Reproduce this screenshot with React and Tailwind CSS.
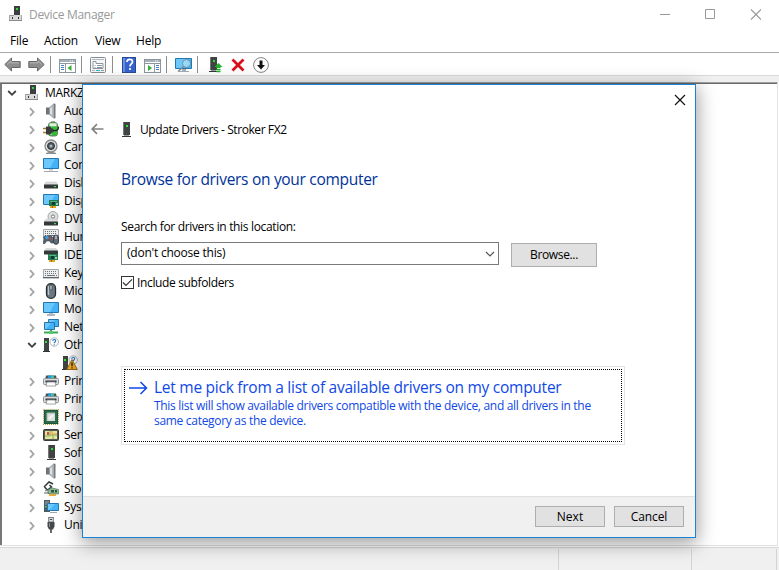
import React from "react";

const Svg = ({ w = 16, h = 16, className = "", children }) => (
  <svg width={w} height={h} viewBox={`0 0 ${w} ${h}`} className={`block shrink-0 ${className}`} fill="none">
    {children}
  </svg>
);

/* ---------- shared drawings ---------- */

const Tower = ({ x = 0 }) => (
  <g transform={`translate(${x} 0)`} shapeRendering="crispEdges">
    <rect x="1" y="0" width="7" height="13" fill="#3f4344" />
    <rect x="1" y="0" width="1" height="13" fill="#777" />
    <rect x="4" y="3" width="2" height="2" fill="#27e32f" />
    <rect x="2" y="13" width="5" height="1" fill="#999" />
    <rect x="0" y="14" width="9" height="1" fill="#333" />
  </g>
);

const Screen = ({ x = 0, y = 0, w = 16, h = 11 }) => (
  <g>
    <path d={`M${x + 0.5} ${y + 0.5}h${w - 1}v${h - 1}h-${w - 1}z`} fill="#42b3f7" stroke="#2476ae" />
    <path d={`M${x + 1} ${y + 1}h${w - 5}l-5 ${h - 2}H${x + 1}z`} fill="#83d2ff" opacity=".65" />
  </g>
);

const Card = ({ x = 6, y = 7 }) => (
  <g transform={`translate(${x} ${y})`} shapeRendering="crispEdges">
    <rect width="10" height="6" fill="#237a50" />
    <rect x="1" y="1" width="7" height="1" fill="#57b585" />
    <rect x="3" y="2" width="3" height="3" fill="#103e2d" />
    <rect x="7" y="3" width="2" height="2" fill="#9ed0ae" />
    <rect x="1" y="6" width="6" height="2" fill="#e9a51d" />
    <rect x="3" y="6" width="1" height="2" fill="#a36b09" />
  </g>
);

const Plate = ({ y = 9 }) => (
  <g>
    <path d={`M3 ${y}h10l2 3H1z`} fill="#d9dbdc" stroke="#bbb" strokeWidth=".4" />
    <rect x="1" y={y + 2.5} width="14" height="4" rx=".6" fill="#343838" />
    <rect x="11" y={y + 4} width="2" height="1.2" fill="#35e444" />
  </g>
);

const ComputerIcon = () => (
  <svg width="15" height="16" viewBox="0 0 15 16" className="block shrink-0" shapeRendering="crispEdges">
    <rect x="6" y="0" width="6" height="9" fill="#3b3f40" />
    <rect x="8" y="2" width="2" height="2" fill="#2fd73a" />
    <rect x="1" y="9" width="13" height="6" fill="#d8d9da" />
    <rect x="1" y="9" width="5" height="1" fill="#999" />
    <rect x="1" y="9" width="1" height="6" fill="#aaa" />
    <rect x="13" y="9" width="1" height="6" fill="#aaa" />
    <rect x="1" y="14" width="13" height="1" fill="#8a8a8a" />
    <rect x="4" y="11" width="1" height="2" fill="#333" />
    <rect x="10" y="11" width="1" height="2" fill="#333" />
  </svg>
);

const Speaker = () => (
  <Svg>
    <rect x="3" y="4.5" width="3.5" height="7" fill="#6d7478" />
    <path d="M6.5 4.5 11 .7v14.6l-4.500-3.800z" fill="#b4babd" stroke="#899094" strokeWidth=".7" />
    <path d="M11 .7h1.500v14.600H11z" fill="#747b80" />
    <path d="M7 5.500 9 4v8l-2-1.500z" fill="#dde1e3" />
  </Svg>
);

const Battery = () => (
  <Svg>
    <rect x="8" y="0" width="4" height="2" fill="#aaa" />
    <rect x="5.500" y="1.500" width="9" height="13.500" rx="2.500" fill="#33b936" stroke="#5f8a5d" />
    <path d="M6.500 2.300h7v3h-7z" fill="#e4eee4" />
    <path d="M8 6v8" stroke="#94ee82" strokeWidth="1.500" />
    <path d="M0 7.500h4M0 11.500h4" stroke="#a67828" strokeWidth="1.600" />
    <path d="M3 5.500h4l3.500 3v2l-3.500 3H3z" fill="#393c3d" />
    <path d="M10 9.500c5 .5 5.500-1 5.500-4" stroke="#222" strokeWidth="1.300" />
  </Svg>
);

const Camera = () => (
  <Svg>
    <circle cx="8" cy="7" r="6" fill="#dde0e1" stroke="#85898b" strokeWidth="1.300" />
    <circle cx="8" cy="7" r="3.500" fill="#52595d" stroke="#303536" />
    <circle cx="8" cy="7" r="1.500" fill="#a9b9c3" />
    <path d="M3 14.500c2-1.500 8-1.500 10 0z" fill="#a9adaf" stroke="#777" strokeWidth=".7" />
  </Svg>
);

const Computer = () => (
  <Svg>
    <Screen y={1} h={11} />
    <path d="M6 12h4v1.500H6z" fill="#bcc6cd" />
    <path d="M1 14.500h14" stroke="#9ca9b2" />
  </Svg>
);

const Disk = () => <Svg><Plate y={7} /></Svg>;
const Display = () => <Svg><Screen y={1} h={11} /><Card /></Svg>;

const Dvd = () => (
  <Svg>
    <circle cx="10" cy="5.500" r="5" fill="#dcdfe0" stroke="#a4a9ac" />
    <circle cx="10" cy="5.500" r="1.600" fill="#fff" stroke="#777" />
    <Plate y={8} />
  </Svg>
);

const Keys = ({ y = 4 }) => (
  <g transform={`translate(0 ${y})`}>
    <path d="M.5.5h15v8H.5z" fill="#eceeef" stroke="#a3a8ab" />
    <path d="M2 2.500h12M2 4.500h12" stroke="#6c7377" strokeDasharray="1 1" />
    <path d="M2 6.500h1M4 6.500h8M13 6.500h1" stroke="#6c7377" />
    <path d="M0 8.800h16" stroke="#444b50" />
  </g>
);

const Keyboard = () => <Svg><Keys /></Svg>;

const Hid = () => (
  <Svg>
    <Keys y={0} />
    <path d="M1.500 7h7l2 7H8L6.500 12h-3L2 14.500H0z" fill="#59626a" stroke="#3f464b" strokeWidth=".6" />
    <circle cx="4" cy="8.500" r="1.800" fill="#3d9de6" />
    <circle cx="7.200" cy="9.500" r="1" fill="#d7443a" />
    <rect x="10.500" y="6" width="5" height="9.300" rx="2.500" fill="#616e78" stroke="#363d43" />
    <path d="M13 6.500v3.500" stroke="#dce4e8" />
  </Svg>
);

const Ide = () => (
  <Svg>
    <path d="M3 1h10l2 3H1z" fill="#d9dbdc" />
    <rect x="1" y="3.500" width="14" height="4" rx=".7" fill="#34393a" />
    <Card x={5} y={7} />
  </Svg>
);

const Mouse = () => (
  <Svg>
    <rect x="3.500" y=".7" width="9" height="14.600" rx="4.300" fill="#6b7781" stroke="#282e32" strokeWidth="1.300" />
    <path d="M5.500 3v9" stroke="#b8c4ce" strokeWidth="1.300" />
    <rect x="7" y="2" width="2" height="5" rx="1" fill="#d9e2e8" stroke="#2f363b" strokeWidth=".7" />
  </Svg>
);

const Monitor = () => (
  <Svg>
    <Screen y={1} h={11} />
    <path d="M6 12h4v1H6z" fill="#b4c0c8" />
    <path d="M4 14h8" stroke="#9aa6b6" strokeWidth="1.600" />
  </Svg>
);

const Network = () => (
  <Svg>
    <Screen x={5} y={0} w={11} h={8} />
    <Screen x={1} y={3} w={11} h={8} />
    <path d="M1 13.500h14M8 11v3" stroke="#3da955" strokeWidth="2" />
    <rect x="6" y="12" width="4" height="3" fill="#56c56c" />
  </Svg>
);

const Question = () => (
  <g>
    <circle cx="11.200" cy="5" r="4.200" fill="#fff" stroke="#a6aaad" strokeWidth=".9" />
    <path d="M9.700 4c0-2 3-2 3-.2 0 1.200-1.500 1.200-1.500 2.500M11.200 7.200v1" stroke="#2476c5" strokeWidth="1.100" />
  </g>
);

const SmallTower = () => (
  <g shapeRendering="crispEdges">
    <rect x="1" y="1" width="5" height="13" fill="#3f4344" />
    <rect x="2" y="4" width="2" height="2" fill="#27e32f" />
    <rect x="0" y="14" width="7" height="1" fill="#333" />
  </g>
);

const Other = () => <Svg><SmallTower /><Question /></Svg>;

const Unknown = () => (
  <Svg>
    <SmallTower />
    <Question />
    <path d="M10 4.500 15.300 14.500H4.700z" fill="#f5aa1c" stroke="#8a6115" strokeWidth=".9" strokeLinejoin="round" />
    <path d="M10 7.500v3.800M10 12.200v1.300" stroke="#222" strokeWidth="1.400" />
  </Svg>
);

const Printer = () => (
  <Svg>
    <path d="M3 2.500h10l.7 3H2.300z" fill="#4b5256" />
    <path d="M5 2.500h3v3H5z" fill="#2494e6" />
    <path d="M8 2.500h3v3H8z" fill="#3ac69b" />
    <rect x=".5" y="5.500" width="15" height="6" rx="1" fill="#d7dadc" stroke="#8c9396" />
    <path d="M2.500 8.500h11" stroke="#33393c" strokeWidth="2" />
    <path d="M4 9h8l1 4H3z" fill="#fff" stroke="#888e91" strokeWidth=".8" />
  </Svg>
);

const Processor = () => (
  <Svg>
    <rect x=".6" y=".6" width="14.800" height="14.800" stroke="#a69b46" strokeWidth="1.200" strokeDasharray="1 1" />
    <rect x="1.500" y="1.500" width="13" height="13" fill="#296a4b" stroke="#1f573e" />
    <rect x="4" y="4" width="8" height="8" fill="#dddfdd" />
    <path d="M4 12V4h8" stroke="#a9b5aa" />
    <path d="m6 10 4-4" stroke="#f4f5f4" strokeWidth="2" />
  </Svg>
);

const Sensor = () => (
  <Svg>
    <rect x=".5" y="2.500" width="15" height="11" rx="1" fill="#535957" stroke="#373c3b" />
    <rect x="2" y="4" width="12" height="8" fill="#e5e49c" />
    <path d="M2 9h5V4M7 8h7M10 8v4" stroke="#80af60" />
    <path d="M9 4v3h5" stroke="#e69b43" />
    <rect x="4" y="5" width="2" height="3" fill="#df493c" />
  </Svg>
);

const Software = () => <Svg><Tower x={4} /></Svg>;

const Storage = () => (
  <Svg>
    <path d="m1 6 5-5 4 2M1.500 6l3 3 4-3-2-2" stroke="#333b3e" strokeWidth="1.500" />
    <path d="M2 9.500h5" stroke="#8b9296" strokeWidth="1.500" />
    <path d="m5 9 4-2 6.500 1.500v4.500L5 12.500z" fill="#8db99b" stroke="#4d7a5d" strokeWidth=".7" />
    <rect x="8" y="9" width="3" height="2.500" fill="#2d5840" />
    <rect x="12" y="9" width="2" height="2.500" fill="#2d5840" />
    <path d="M6 14h7" stroke="#e6a326" strokeWidth="1.800" />
    <path d="M1 12h5" stroke="#5c6467" />
  </Svg>
);

const System = () => (
  <Svg>
    <rect x="1" y="1" width="6" height="12" fill="#4e5a61" />
    <path d="M2 3h4M2 5h4" stroke="#9dacb5" />
    <rect x="2" y="7" width="1.500" height="1.500" fill="#45df4a" />
    <Screen x={4} y={4} w={12} h={8} />
    <path d="M7 13.500h7" stroke="#9aa8b0" />
  </Svg>
);

const Usb = () => (
  <Svg>
    <rect x="5.700" y=".5" width="4.600" height="4.500" fill="#dfe2e3" stroke="#707679" />
    <path d="M7 2.500h2" stroke="#444" />
    <path d="M4.500 5h7v4.500L10 12.500H6L4.500 9.500z" fill="#45494b" />
    <path d="M6.500 6v4" stroke="#888d90" />
    <path d="M8 12v4" stroke="#45494b" strokeWidth="1.600" />
  </Svg>
);

/* ---------- device tree ---------- */

const devices = [
  ["Audio", Speaker],
  ["Batteries", Battery],
  ["Cameras", Camera],
  ["Computer", Computer],
  ["Disk drives", Disk],
  ["Display", Display],
  ["DVD", Dvd],
  ["Human", Hid],
  ["IDE ATA", Ide],
  ["Keyboards", Keyboard],
  ["Mice", Mouse],
  ["Monitors", Monitor],
  ["Network", Network],
  ["Other", Other, "open"],
  ["", Unknown, "child"],
  ["Print", Printer],
  ["Printers", Printer],
  ["Processors", Processor],
  ["Sensors", Sensor],
  ["Software", Software],
  ["Sound", Speaker],
  ["Storage", Storage],
  ["System", System],
  ["Universal", Usb],
];

const ChevronDown = () => (
  <Svg w={10} h={10}><path d="m1.200 3 3.800 3.800L8.800 3" stroke="#404040" strokeWidth="1.800" /></Svg>
);
const ChevronRight = () => (
  <Svg w={10} h={10} className="relative top-px"><path d="m3 1.200 3.600 3.800L3 8.800" stroke="#a3a3a3" strokeWidth="1.800" /></Svg>
);

function Tree() {
  return (
    <div className="h-full w-[100px] overflow-hidden whitespace-nowrap">
      <div className="flex h-[18px] items-center pl-[5px]">
        <ChevronDown />
        <div className="ml-[7px]"><ComputerIcon /></div>
        <span className="ml-[6px] text-[12px] tracking-[-0.3px]">MARKZ-PC</span>
      </div>
      {devices.map(([name, Icon, kind], i) => (
        <div key={i} className={`flex h-[18px] items-center ${kind === "child" ? "pl-[60px]" : "pl-[25px]"}`}>
          {kind !== "child" && <div className="mr-[6px]">{kind === "open" ? <ChevronDown /> : <ChevronRight />}</div>}
          <Icon />
          <span className="ml-[5px] text-[12px] tracking-[-0.3px]">{name}</span>
        </div>
      ))}
    </div>
  );
}

/* ---------- toolbar ---------- */

const Sep = ({ className }) => <div className={`h-[17px] w-px shrink-0 bg-[#8d8d8d] ${className}`} />;

const BigArrow = ({ flip }) => (
  <Svg w={17} h={15} className={flip ? "-scale-x-100" : ""}>
    <path d="M.8 7.500 7.500 1v3.500h8.700v6H7.500V14z" fill="#8d8d8d" stroke="#686868" />
    <path d="M3 7.500 7 3.800v2h8" stroke="#b8b8b8" />
  </Svg>
);

const PanelIcon = ({ right }) => (
  <Svg w={17} h={14}>
    <rect x=".5" y=".5" width="16" height="13" fill="#fff" stroke="#8c969e" />
    <path d="M1 2h15" stroke="#a6b0b9" strokeWidth="2" />
    <path d="M11 2h1M13 2h1" stroke="#fff" />
    <path d="M1 4.500h15" stroke="#8c969e" />
    <path d={right ? "M10.500 4v10" : "M6.500 4v10"} stroke="#929ca5" />
    <path d={right ? "M12 6.500h3M12 8.500h3M12 10.500h3" : "M2 6.500h3M2 8.500h3M2 10.500h3"} stroke="#477ebd" />
    <path d={right ? "m4 6 4 3-4 3z" : "m12.500 6-4 3 4 3z"} fill="#36ad36" />
  </Svg>
);

function Toolbar() {
  return (
    <div className="flex h-[22px] shrink-0 items-center pt-px pl-1">
      <BigArrow />
      <div className="ml-[7px]"><BigArrow flip /></div>
      <Sep className="ml-[5px]" />
      <div className="mt-[3px] ml-2"><PanelIcon /></div>
      <Sep className="ml-[5px]" />
      <Svg w={16} h={16} className="ml-2">
        <rect x=".5" y=".5" width="15" height="15" rx="1" fill="#f5f6f7" stroke="#858b90" />
        <path d="M2 2.500h12M2 13.500h3" stroke="#b1b9bf" />
        <path d="M3 4.500h3v2h7v5H3z" fill="#fff" stroke="#8c969e" />
        <path d="M4.500 8.500h1M4.500 10.500h1M7 8.500h5M7 10.500h5" stroke="#8894a0" />
        <path d="M6 13.500h4" stroke="#25bcd4" />
        <path d="M11 13.500h3" stroke="#999" />
      </Svg>
      <Sep className="ml-[6px]" />
      <Svg w={14} h={16} className="ml-[9px]">
        <rect x=".5" y=".5" width="13" height="15" fill="#3763ce" stroke="#274997" />
        <path d="M1 1h2v14H1z" fill="#6a8fdf" />
        <path d="M5 5c0-3.500 5.500-3.200 5.500-.3C10.500 7 8 7 8 9.500M8 11v2" stroke="#fff" strokeWidth="1.700" />
      </Svg>
      <div className="mt-[3px] ml-2"><PanelIcon right /></div>
      <Sep className="ml-[5px]" />
      <Svg w={17} h={16} className="ml-2">
        <Screen y={1} w={17} h={11} />
        <path d="M7 12h4v2H7zM4 14h10v1H4z" fill="#a5afb5" />
        <circle cx="11.500" cy="6.500" r="4" fill="#a9def8" fillOpacity=".8" stroke="#738792" strokeWidth=".9" />
        <path d="m8.500 9.500-5.500 5" stroke="#7e8c94" strokeWidth="1.500" />
      </Svg>
      <Sep className="ml-[5px]" />
      <Svg w={14} h={16} className="ml-[11px]">
        <Tower />
        <path d="m9.500 6 4 4h-2v1H7.500v-1h-2z" fill="#20b42b" />
        <path d="M7.500 12.500h4M7.500 14.500h4" stroke="#20b42b" strokeWidth="1.300" />
      </Svg>
      <Svg w={14} h={14} className="ml-2"><path d="m1.500 1.500 11 11m0-11-11 11" stroke="#d8101a" strokeWidth="2.800" /></Svg>
      <Svg w={16} h={16} className="ml-2">
        <circle cx="8" cy="8" r="7.400" fill="#fff" stroke="#777" strokeWidth=".9" />
        <path d="M6.500 3.500h3V8H12l-4 4.500L4 8h2.500z" fill="#111" />
      </Svg>
    </div>
  );
}

/* ---------- dialog ---------- */

const Button = ({ className, children }) => (
  <button className={`border border-[#adadad] bg-[#e1e1e1] text-center text-[12px] leading-none ${className}`}>{children}</button>
);

function Dialog() {
  return (
    <div className="absolute top-[84px] left-[82px] flex h-[454px] w-[614px] flex-col border border-[#1883d7] bg-white whitespace-nowrap shadow-[0_4px_18px_1px_rgba(0,0,0,0.4)]">
      <div className="flex h-[29px] shrink-0 items-center justify-end pr-[9px]">
        <Svg w={12} h={12}><path d="m1 1 10 10m0-10L1 11" stroke="#111" strokeWidth="1.150" /></Svg>
      </div>
      <div className="flex h-[31px] shrink-0 items-center pl-2">
        <Svg w={13} h={12} className="-mt-0.5"><path d="M12.500 6H1.500M6 1.200 1.200 6 6 10.800" stroke="#838383" strokeWidth="1.700" /></Svg>
        <Svg w={9} h={16} className="ml-[18px]"><Tower /></Svg>
        <span className="ml-[9px] text-[12px] tracking-[-0.42px]">Update Drivers - Stroker FX2</span>
      </div>
      <div className="flex grow flex-col items-start pl-[38px]">
        <h1 className="mt-[23px] text-[15.500px] leading-[22px] tracking-[-0.3px] text-[#003399]">Browse for drivers on your computer</h1>
        <label className="mt-[29px] text-[12px] leading-4 tracking-[-0.34px]">Search for drivers in this location:</label>
        <div className="mt-[7px] flex">
          <div className="flex h-[23px] w-[378px] items-center justify-between border border-[#7a7a7a] pr-[3px] pl-[5px]">
            <span className="-mt-0.5 text-[12px] tracking-[-0.22px]">(don't choose this)</span>
            <Svg w={10} h={8}><path d="m1 2 4 4 4-4" stroke="#555" strokeWidth="1.100" /></Svg>
          </div>
          <Button className="mt-px ml-3 h-6 w-[86px] tracking-[-0.35px]">Browse...</Button>
        </div>
        <div className="mt-[8px] flex h-4 items-center">
          <div className="-mt-px flex h-[13px] w-[13px] items-center justify-center border border-[#333]">
            <Svg w={11} h={11}><path d="m1 5.500 3 3L10 2.300" stroke="#333" strokeWidth="1.200" /></Svg>
          </div>
          <span className="ml-[3px] text-[12px] tracking-[-0.36px]">Include subfolders</span>
        </div>
        <div className="mt-[75px] h-[79px] w-[504px] border border-[#e3e3e3] p-[2px]">
          <div className="flex h-full border border-dotted border-black pt-[7px] pl-[4px] text-[#0f48e6]">
            <Svg w={19} h={14} className="mt-[4px]"><path d="M0 7h17.500M11.500 1l6 6-6 6" stroke="#0f48e6" strokeWidth="1.500" /></Svg>
            <div className="ml-[6px]">
              <div className="text-[15.500px] leading-[20px] tracking-[-0.26px]">Let me pick from a list of available drivers on my computer</div>
              <div className="mt-px text-[12px] leading-[15px] tracking-[-0.3px]">
                This list will show available drivers compatible with the device, and all drivers in the<br />same category as the device.
              </div>
            </div>
          </div>
        </div>
      </div>
      <div className="flex h-[41px] shrink-0 items-start justify-end border-t border-[#dfdfdf] bg-[#f0f0f0] pt-[9px] pr-[11px]">
        <Button className="h-[21px] w-[70px]">Next</Button>
        <Button className="ml-[9px] h-[21px] w-[70px] tracking-[-0.1px]">Cancel</Button>
      </div>
    </div>
  );
}

export default function App() {
  return (
    <div className="relative flex h-[570px] w-[779px] flex-col overflow-hidden bg-white font-['Open_Sans','Noto_Sans',sans-serif] text-[12px] text-black">
      <header className="flex h-[30px] shrink-0 items-center pl-2">
        <div className="-mt-0.5"><ComputerIcon /></div>
        <span className="ml-[6px] text-[12px] tracking-[-0.3px] text-[#999]">Device Manager</span>
        <div className="mr-[18px] ml-auto flex items-center gap-[34px]">
          <Svg w={11} h={12}><path d="M0 5.500h10" stroke="#999" /></Svg>
          <Svg w={11} h={12}><path d="M.5.500h9v9h-9z" stroke="#999" /></Svg>
          <Svg w={11} h={12}><path d="m1 .5 10 10m0-10-10 10" stroke="#999" strokeWidth="1.100" /></Svg>
        </div>
      </header>
      <nav className="flex h-[22px] shrink-0 items-center pl-[10px] text-[12px] tracking-[-0.2px]">
        <span className="w-[34px]">File</span>
        <span className="w-[51px]">Action</span>
        <span className="w-[41px]">View</span>
        <span>Help</span>
      </nav>
      <div className="h-px shrink-0 bg-[#aaa]" />
      <Toolbar />
      <div className="h-[7px] shrink-0 border-t border-[#d9d9d9] bg-[#f0f0f0]" />
      <main className="mr-px h-[464px] shrink-0 border-t border-r border-b border-t-[#a0a0a0] border-r-[#e3e3e3] border-b-[#dfdfdf]">
        <div className="h-full border-t border-l-2 border-[#696969] border-l-[#777]">
          <Tree />
        </div>
      </main>
      <footer className="mt-px flex grow border-t border-[#d7d7d7] bg-[#f0f0f0] pt-px">
        <div className="w-[559px] border-r border-[#d4d4d4]" />
        <div className="w-[133px] border-r border-[#d4d4d4]" />
        <div className="w-[85px] border-r border-[#d4d4d4]" />
      </footer>
      <Dialog />
    </div>
  );
}
